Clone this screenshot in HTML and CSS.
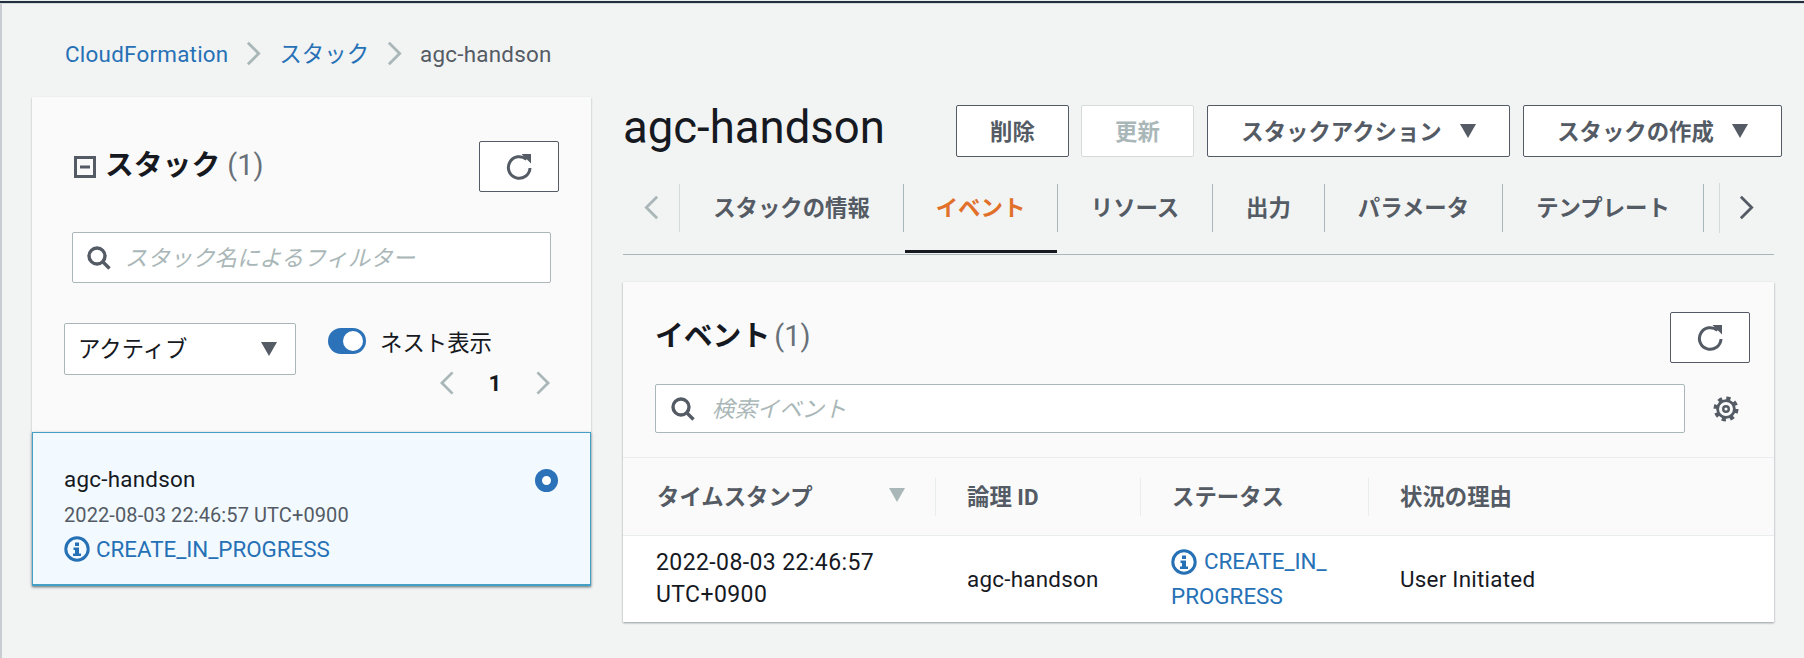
FILE: index.html
```html
<!DOCTYPE html>
<html lang="ja">
<head>
<meta charset="utf-8">
<title>agc-handson</title>
<link rel="stylesheet" href="styles.css">
</head>
<body>
<svg class="defs" width="0" height="0" aria-hidden="true">
  <symbol id="refresh" viewBox="0 0 26 30"><path d="M20.500 7.500A10.800 10.800 0 1 0 24 16" fill="none" stroke="currentColor" stroke-width="3"/><path d="M15.500 2h9.500v9.500z" fill="currentColor"/></symbol>
  <symbol id="search" viewBox="0 0 24 24"><circle cx="10" cy="10" r="8" fill="none" stroke="currentColor" stroke-width="3.400"/><path d="M15.500 15.500l7 7" fill="none" stroke="currentColor" stroke-width="3.400"/></symbol>
  <symbol id="info" viewBox="0 0 26 26"><circle cx="13" cy="13" r="11.200" fill="none" stroke="currentColor" stroke-width="3"/><path d="M11 6.500h4v3.500h-4zM9.500 11.500h5.500v6h2v2.500h-8v-2.500h2v-3.500h-1.500z" fill="currentColor"/></symbol>
  <symbol id="gear" viewBox="0 0 26 26"><circle cx="13" cy="13" r="10.700" fill="none" stroke="currentColor" stroke-width="3.600" stroke-dasharray="4.200 4.200"/><circle cx="13" cy="13" r="8.400" fill="none" stroke="currentColor" stroke-width="2.800"/><circle cx="13" cy="13" r="2.800" fill="none" stroke="currentColor" stroke-width="2.400"/></symbol>
  <symbol id="chev-r" viewBox="0 0 16 26"><path d="M2 1.500L13.500 13 2 24.500" fill="none" stroke="currentColor" stroke-width="3"/></symbol>
  <symbol id="chev-l" viewBox="0 0 16 26"><path d="M14 1.500L2.500 13 14 24.500" fill="none" stroke="currentColor" stroke-width="3"/></symbol>
  <symbol id="caret" viewBox="0 0 16 14"><path d="M0 0h16L8 14z" fill="currentColor"/></symbol>
</svg>

<div class="topstrip"></div>
<div class="page">
  <nav class="crumbs">
    <a class="link latin">CloudFormation</a>
    <svg class="crumb-sep"><use href="#chev-r"/></svg>
    <a class="link crumb-ja">スタック</a>
    <svg class="crumb-sep"><use href="#chev-r"/></svg>
    <span class="crumb-current latin">agc-handson</span>
  </nav>

  <div class="layout">
    <aside class="stacks">
      <div class="stacks-top">
        <div class="stacks-head">
          <svg class="collapse" viewBox="0 0 22 22"><rect x="1.500" y="1.500" width="19" height="19" fill="none" stroke="currentColor" stroke-width="3"/><path d="M6 11h10" stroke="currentColor" stroke-width="3"/></svg>
          <h2 class="panel-title stacks-title">スタック <span class="count">(1)</span></h2>
          <button class="icon-btn"><svg class="i-refresh"><use href="#refresh"/></svg></button>
        </div>
        <label class="search stacks-search">
          <svg class="i-search"><use href="#search"/></svg>
          <input class="search-input" placeholder="スタック名によるフィルター">
        </label>
        <div class="filters">
          <div class="select"><span class="select-text">アクティブ</span><svg class="i-caret"><use href="#caret"/></svg></div>
          <div class="filter-right">
            <div class="nest"><span class="toggle"><span class="knob"></span></span><span>ネスト表示</span></div>
            <div class="pager">
              <svg class="pager-chev"><use href="#chev-l"/></svg>
              <b class="pager-num">1</b>
              <svg class="pager-chev"><use href="#chev-r"/></svg>
            </div>
          </div>
        </div>
      </div>
      <div class="stack-card">
        <div class="card-body">
          <div class="card-name latin">agc-handson</div>
          <div class="card-date">2022-08-03 22:46:57 UTC+0900</div>
          <div class="card-status"><svg class="i-info"><use href="#info"/></svg>CREATE_IN_PROGRESS</div>
        </div>
        <span class="radio"></span>
      </div>
    </aside>

    <main class="detail">
      <header class="detail-head">
        <h1 class="detail-title">agc-handson</h1>
        <div class="actions">
          <button class="btn btn-small">削除</button>
          <button class="btn btn-small btn-disabled">更新</button>
          <button class="btn btn-action">スタックアクション<svg class="i-caret"><use href="#caret"/></svg></button>
          <button class="btn btn-create">スタックの作成<svg class="i-caret"><use href="#caret"/></svg></button>
        </div>
      </header>

      <div class="tabs">
        <div class="tab-arrow tab-arrow-l"><svg class="tab-chev tab-chev-off"><use href="#chev-l"/></svg></div>
        <div class="tab t1">スタックの情報</div>
        <div class="tab t2 tab-active">イベント</div>
        <div class="tab t3">リソース</div>
        <div class="tab t4">出力</div>
        <div class="tab t5">パラメータ</div>
        <div class="tab t6">テンプレート</div>
        <div class="tab-arrow tab-arrow-r"><svg class="tab-chev"><use href="#chev-r"/></svg></div>
      </div>

      <section class="events">
        <div class="events-top">
          <div class="events-head">
            <h2 class="panel-title">イベント <span class="count count-events">(1)</span></h2>
            <button class="icon-btn"><svg class="i-refresh"><use href="#refresh"/></svg></button>
          </div>
          <div class="events-search-row">
            <label class="search events-search">
              <svg class="i-search"><use href="#search"/></svg>
              <input class="search-input" placeholder="検索イベント">
            </label>
            <svg class="i-gear"><use href="#gear"/></svg>
          </div>
        </div>
        <div class="thead">
          <div class="th th1">タイムスタンプ<svg class="i-sort"><use href="#caret"/></svg></div>
          <div class="th th2">論理 ID</div>
          <div class="th th3">ステータス</div>
          <div class="th th4">状況の理由</div>
        </div>
        <div class="trow">
          <div class="td td1">2022-08-03 22:46:57<br>UTC+0900</div>
          <div class="td td2 latin">agc-handson</div>
          <div class="td td3"><svg class="i-info"><use href="#info"/></svg>CREATE_IN_<br>PROGRESS</div>
          <div class="td td4 latin">User Initiated</div>
        </div>
      </section>
    </main>
  </div>
</div>
</body>
</html>
```
FILE: styles.css
```css
* { box-sizing: border-box; }
html, body { margin: 0; height: 100%; }
body {
  background: #f2f3f3;
  color: #16191f;
  font-family: Roboto, "Noto Sans CJK JP", sans-serif;
  font-size: 22.400px;
  overflow: hidden;
}
.defs { position: absolute; }
.topstrip { height: 4px; background: #232f3e; border-top: 1px solid #eaeded; border-bottom: 1px solid #d5dbdb; }
.page { height: 654px; padding: 0 30px; border-left: 2px solid #c9ccd1; }
.link { color: #2671b6; }
.latin { letter-spacing: .25px; }

.crumbs { display: flex; align-items: center; height: 93px; padding: 6px 0 0 33px; }
.crumb-sep { width: 15px; height: 25px; margin: 0 18px; color: #aab7b8; }
.crumb-ja { margin-bottom: 4px; }
.crumb-current { color: #545b64; }

.layout { display: flex; align-items: flex-start; gap: 32px; }

.stacks { width: 559px; flex: none; background: #fafafa; box-shadow: 0 1px 2px rgba(0,28,36,.3); }
.stacks-top { padding: 44px 32px 0; height: 335px; }
.stacks-head { display: flex; align-items: center; padding-left: 10px; }
.collapse { width: 22px; height: 22px; color: #545b64; margin-right: 9px; }
.panel-title { margin: -4px 0 0; font-size: 28.800px; font-weight: 700; line-height: 40px; }
.stacks-title { flex: 1; }
.count { font-weight: 400; color: #687078; }
.count-events { margin-left: -3px; }
.icon-btn { width: 80px; height: 51px; background: #fff; border: 1px solid #545b64; border-radius: 2px; color: #545b64; display: flex; align-items: center; justify-content: center; padding: 0; }
.i-refresh { width: 26px; height: 30px; }

.search { display: flex; align-items: center; background: #fff; border: 1px solid #aab7b8; border-radius: 2px; }
.stacks-search { height: 51px; margin: 40px 8px 0; padding-left: 14px; }
.stacks-search .i-search { margin-right: 14px; }
.i-search { width: 24px; height: 24px; flex: none; color: #545b64; margin-right: 17px; }
.search-input { flex: 1; border: 0; outline: 0; background: transparent; font: italic 22.400px Roboto, "Noto Sans CJK JP", sans-serif; min-width: 0; padding: 0; }
.search-input::placeholder { color: #aab7b8; opacity: 1; }

.filters { display: flex; margin-top: 40px; }
.select { width: 232px; height: 52px; background: #fff; border: 1px solid #aab7b8; border-radius: 2px; display: flex; align-items: center; justify-content: space-between; padding: 0 18px 0 13px; }
.select-text { margin-bottom: 4px; }
.i-caret { width: 16px; height: 14px; color: #545b64; flex: none; }
.filter-right { margin-left: 32px; flex: 1; }
.nest { display: flex; align-items: center; gap: 14px; height: 36px; }
.toggle { width: 38px; height: 26px; border-radius: 13px; background: #2b72b8; display: flex; align-items: center; justify-content: flex-end; padding-right: 3px; }
.knob { width: 20px; height: 20px; border-radius: 50%; background: #fff; }
.pager { display: flex; align-items: center; justify-content: flex-end; padding-right: 8px; margin-top: 12px; height: 24px; }
.pager-chev { width: 16px; height: 24px; color: #aab7b8; }
.pager-num { width: 16px; margin: 0 32px; text-align: center; }

.stack-card { height: 154px; background: #f2faff; border: 1px solid #44a0c4; border-bottom-width: 2px; box-shadow: 0 1px 3px rgba(0,28,36,.4); padding: 26px 32px 0 31px; display: flex; justify-content: space-between; align-items: flex-start; }
.card-name { line-height: 40px; }
.card-date { font-size: 20px; letter-spacing: .1px; color: #545b64; line-height: 28px; margin-top: 2px; }
.card-status { color: #2671b6; line-height: 34px; margin-top: 3px; letter-spacing: -.03px; display: flex; align-items: center; gap: 6px; }
.i-info { width: 26px; height: 26px; color: #2671b6; flex: none; }
.radio { width: 23px; height: 23px; border: 7px solid #2b72b8; border-radius: 50%; background: #fff; margin: 10px 0 0; }

.detail { flex: 1; min-width: 0; }
.detail-head { display: flex; align-items: center; justify-content: space-between; height: 60px; margin-top: 4px; }
.detail-title { margin: -7px 0 0; font-size: 45.500px; font-weight: 400; }
.actions { display: flex; gap: 13px; margin-right: -8px; }
.btn { height: 52px; background: #fff; border: 1px solid #545b64; border-radius: 2px; color: #545b64; font: 700 22.400px Roboto, "Noto Sans CJK JP", sans-serif; padding: 0 0 3px; display: flex; align-items: center; justify-content: center; }
.btn .i-caret { margin: 3px 0 0 18px; }
.btn-small { width: 113px; }
.btn-disabled { color: #aab7b8; border-color: #d5dbdb; margin-left: -1px; }
.btn-action { width: 303px; }
.btn-create { width: 259px; }

.tabs { display: flex; align-items: center; height: 72px; margin-top: 22px; border-bottom: 1px solid #aab7b8; }
.tab { height: 48px; margin-bottom: 22px; padding-bottom: 3px; display: flex; align-items: center; justify-content: center; font-weight: 700; color: #545b64; border-left: 1px solid #aab7b8; position: relative; }
.t1 { width: 224px; border-left-color: #d5dbdb; }
.t2 { width: 154px; }
.t3 { width: 155px; }
.t4 { width: 112px; }
.t5 { width: 178px; }
.t6 { width: 202px; border-right: 1px solid #aab7b8; }
.tab-active { color: #e1702a; }
.tab-active::after { content: ""; position: absolute; left: 1px; right: 0; bottom: -21px; height: 3px; background: #16191f; }
.tab-arrow { height: 50px; margin-bottom: 22px; display: flex; align-items: center; }
.tab-arrow-l { width: 56px; padding-left: 21px; }
.tab-arrow-r { flex: 1; border-left: 1px solid #d5dbdb; margin-left: 15px; padding-left: 19px; }
.tab-chev { width: 15px; height: 25px; color: #545b64; }
.tab-chev-off { color: #aab7b8; }

.events { margin-top: 27px; background: #fff; box-shadow: 0 1px 2px rgba(0,28,36,.4); }
.events-top { background: #fafafa; padding: 30px 24px 0 32px; height: 176px; border-bottom: 1px solid #eaeded; }
.events-head { display: flex; justify-content: space-between; align-items: center; }
.events-search-row { display: flex; align-items: center; margin-top: 21px; }
.events-search { flex: 1; height: 49px; padding-left: 15px; }
.i-gear { width: 26px; height: 26px; color: #545b64; margin-left: 28px; margin-right: 11px; }

.thead, .trow { display: grid; grid-template-columns: 312px 205px 228px 1fr; }
.thead { height: 78px; background: #fafafa; border-bottom: 1px solid #eaeded; align-items: center; }
.th { height: 38px; display: flex; align-items: center; font-weight: 700; color: #545b64; border-left: 1px solid #eaeded; padding: 0 0 4px 31px; }
.th1 { border-left: 0; padding: 0 30px 4px 34px; justify-content: space-between; }
.i-sort { width: 16px; height: 14px; color: #aab7b8; }
.trow { height: 86px; align-items: center; }
.td1 { padding-left: 33px; line-height: 32px; font-size: 23px; letter-spacing: .4px; }
.td2 { padding-left: 32px; }
.td3 { padding-left: 31px; line-height: 35px; color: #2671b6; }
.td3 .i-info { vertical-align: -6px; margin-right: 7px; }
.td4 { padding-left: 32px; }
```
